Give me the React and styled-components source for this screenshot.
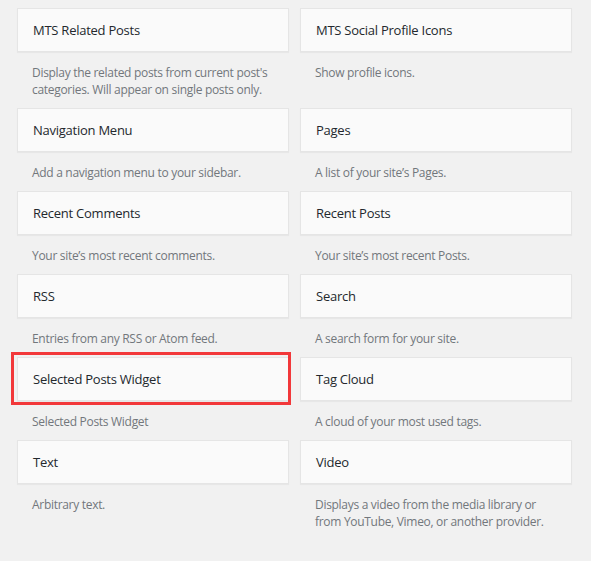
import React from "react";
import styled, { createGlobalStyle } from "styled-components";

const Global = createGlobalStyle`
  html, body { margin: 0; padding: 0; background: #f1f1f1; }
  body { font-family: "Open Sans", "Noto Sans", sans-serif; }
`;

const Page = styled.div`
  background: #f1f1f1;
  min-height: 561px;
  padding: 8px 0 0 17px;
  box-sizing: border-box;
`;

const Grid = styled.div`
  display: grid;
  grid-template-columns: 272px 272px;
  column-gap: 11px;
`;

const Item = styled.div`
  position: relative;
`;

const Widget = styled.div`
  background: #fafafa;
  border: 1px solid #e5e5e5;
  box-shadow: 0 1px 1px rgba(0, 0, 0, 0.04);
`;

const Title = styled.h3`
  margin: 0;
  padding: 13px 15px;
  font-size: 13px;
  line-height: 16px;
  font-weight: 500;
  letter-spacing: -0.25px;
  color: #23282d;
  white-space: nowrap;
`;

const Description = styled.div`
  padding: 12px 15px 10px;
  font-size: 12px;
  line-height: 17px;
  letter-spacing: -0.3px;
  color: #72777c;
`;

const Highlight = styled.div`
  position: absolute;
  left: -6px;
  top: -5px;
  width: 280px;
  height: 53px;
  border: 3px solid #f2383a;
  box-sizing: border-box;
  pointer-events: none;
`;

const widgets = [
  ["MTS Related Posts", "Display the related posts from current post's categories. Will appear on single posts only."],
  ["MTS Social Profile Icons", "Show profile icons."],
  ["Navigation Menu", "Add a navigation menu to your sidebar."],
  ["Pages", "A list of your site\u2019s Pages."],
  ["Recent Comments", "Your site\u2019s most recent comments."],
  ["Recent Posts", "Your site\u2019s most recent Posts."],
  ["RSS", "Entries from any RSS or Atom feed."],
  ["Search", "A search form for your site."],
  ["Selected Posts Widget", "Selected Posts Widget", true],
  ["Tag Cloud", "A cloud of your most used tags."],
  ["Text", "Arbitrary text."],
  ["Video", "Displays a video from the media library or from YouTube, Vimeo, or another provider."],
];

export default function App() {
  return (
    <Page>
      <Global />
      <Grid>
        {widgets.map(([title, desc, hl]) => (
          <Item key={title}>
            {hl && <Highlight />}
            <Widget>
              <Title>{title}</Title>
            </Widget>
            <Description>{desc}</Description>
          </Item>
        ))}
      </Grid>
    </Page>
  );
}
